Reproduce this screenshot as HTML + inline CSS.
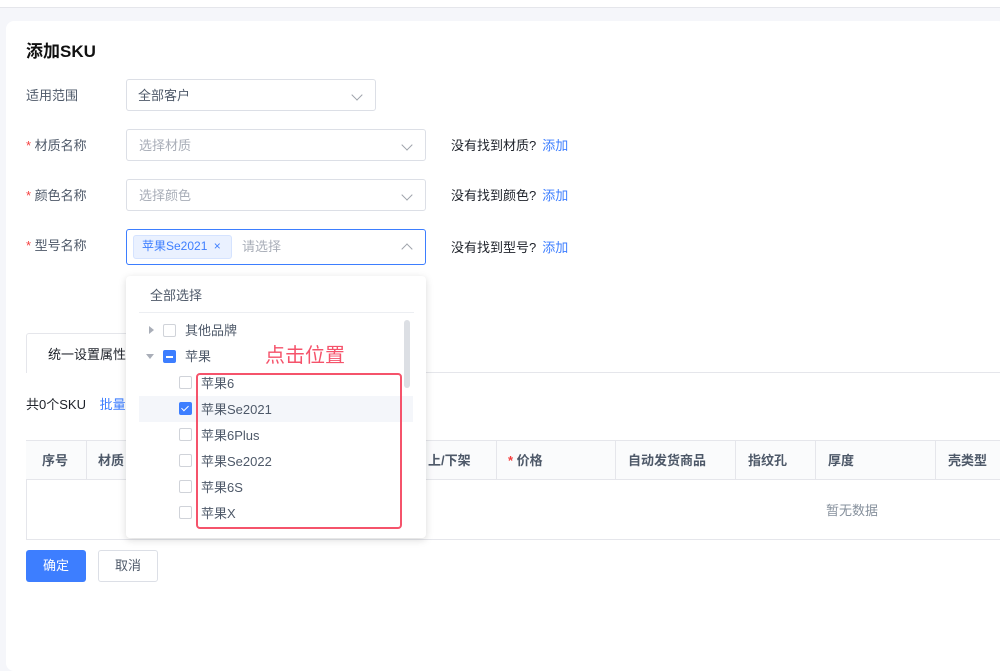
<!DOCTYPE html>
<html><head><meta charset="utf-8"><style>
*{margin:0;padding:0;box-sizing:border-box}
body{width:1000px;height:658px;overflow:hidden;background:#f5f6fa;font-family:"Liberation Sans","Noto Sans CJK SC",sans-serif;font-size:13px;color:#1d2129;position:relative;line-height:15px}
.a{position:absolute;white-space:nowrap}
.top{left:0;top:0;width:1000px;height:8px;background:#fff;border-bottom:1px solid #e5e6eb}
.card{left:6px;top:21px;width:1000px;height:650px;background:#fff;border-radius:8px}
.lbl{color:#4e5969;font-size:13px}
.req:before{content:"* ";color:#f53f3f}
.sel{border:1px solid #dcdfe6;border-radius:3px;height:32px;background:#fff}
.ph{color:#a9aeb8}
.chev{position:absolute;right:14px;top:11px;width:8px;height:8px;border-right:1px solid #9ea3ab;border-bottom:1px solid #9ea3ab;transform:rotate(45deg)}
.link{color:#3d7eff;margin-left:6px}
.cb{position:absolute;width:13px;height:13px;border:1px solid #d0d3d9;border-radius:2px;background:#fff}
.it{color:#4e5969;font-size:13px}
</style></head><body>
<div class="a top"></div>
<div class="a card"></div>
<div class="a" style="left:26px;top:42px;font-size:17px;line-height:20px;font-weight:bold;color:#111">添加SKU</div>

<div class="a lbl" style="left:26px;top:88px">适用范围</div>
<div class="a sel" style="left:126px;top:79px;width:250px"><span class="a" style="left:11px;top:8px;color:#4e5969">全部客户</span><i class="chev"></i></div>

<div class="a lbl req" style="left:26px;top:138px">材质名称</div>
<div class="a sel" style="left:126px;top:129px;width:300px"><span class="a ph" style="left:12px;top:8px">选择材质</span><i class="chev"></i></div>
<div class="a" style="left:451px;top:138px">没有找到材质?<span class="link">添加</span></div>

<div class="a lbl req" style="left:26px;top:188px">颜色名称</div>
<div class="a sel" style="left:126px;top:179px;width:300px"><span class="a ph" style="left:12px;top:8px">选择颜色</span><i class="chev"></i></div>
<div class="a" style="left:451px;top:188px">没有找到颜色?<span class="link">添加</span></div>

<div class="a lbl req" style="left:26px;top:238px">型号名称</div>
<div class="a sel" style="left:126px;top:229px;width:300px;height:36px;border-color:#3d7eff">
<span class="a" style="left:6px;top:5px;height:24px;width:99px;background:#eaf1ff;border:1px solid #d5e3ff;border-radius:3px;color:#3d7eff;font-size:12px;line-height:21px;padding-left:8px">苹果Se2021 <span style="margin-left:3px">×</span></span>
<span class="a ph" style="left:115px;top:9px">请选择</span>
<i class="chev" style="top:15px;transform:rotate(-135deg)"></i></div>
<div class="a" style="left:451px;top:240px">没有找到型号?<span class="link">添加</span></div>

<div class="a" style="left:26px;top:372px;width:980px;border-top:1px solid #e5e6eb"></div>
<div class="a" style="left:26px;top:333px;width:120px;height:40px;border:1px solid #e5e6eb;border-bottom:none;border-radius:3px 3px 0 0;background:#fff"><span class="a" style="left:21px;top:13px">统一设置属性</span></div>
<div class="a" style="left:26px;top:397px">共0个SKU <span class="link" style="margin-left:10px">批量</span></div>

<div class="a" style="left:26px;top:440px;width:980px;height:100px;border:1px solid #e5e6eb"></div>
<div class="a" style="left:26px;top:479px;width:980px;border-top:1px solid #e5e6eb"></div>
<div class="a" style="left:26px;top:441px;width:980px;height:38px;background:#fafbfc"></div>
<div class="a" style="left:86px;top:441px;height:38px;border-left:1px solid #e5e6eb"></div>
<div class="a" style="left:496px;top:441px;height:38px;border-left:1px solid #e5e6eb"></div>
<div class="a" style="left:615px;top:441px;height:38px;border-left:1px solid #e5e6eb"></div>
<div class="a" style="left:735px;top:441px;height:38px;border-left:1px solid #e5e6eb"></div>
<div class="a" style="left:815px;top:441px;height:38px;border-left:1px solid #e5e6eb"></div>
<div class="a" style="left:935px;top:441px;height:38px;border-left:1px solid #e5e6eb"></div>
<div class="a" style="top:453px;left:42px;color:#4e5969;font-weight:bold">序号</div>
<div class="a" style="top:453px;left:98px;color:#4e5969;font-weight:bold">材质</div>
<div class="a" style="top:453px;left:428px;color:#4e5969;font-weight:bold">上/下架</div>
<div class="a" style="top:453px;left:508px;color:#4e5969;font-weight:bold"><span style="color:#f53f3f">*</span> 价格</div>
<div class="a" style="top:453px;left:628px;color:#4e5969;font-weight:bold">自动发货商品</div>
<div class="a" style="top:453px;left:748px;color:#4e5969;font-weight:bold">指纹孔</div>
<div class="a" style="top:453px;left:828px;color:#4e5969;font-weight:bold">厚度</div>
<div class="a" style="top:453px;left:948px;color:#4e5969;font-weight:bold">壳类型</div>
<div class="a" style="top:503px;left:826px;color:#86909c">暂无数据</div>

<div class="a" style="left:26px;top:550px;width:60px;height:32px;background:#3d7eff;border-radius:3px;color:#fff;line-height:31px;text-align:center">确定</div>
<div class="a" style="left:98px;top:550px;width:60px;height:32px;border:1px solid #dcdfe6;border-radius:3px;color:#4e5969;line-height:29px;text-align:center;background:#fff">取消</div>

<div class="a" style="left:126px;top:276px;width:300px;height:262px;background:#fff;border-radius:4px;box-shadow:0 2px 8px rgba(0,0,0,.15)"></div>
<div class="a" style="left:150px;top:288px;color:#4e5969">全部选择</div>
<div class="a" style="left:139px;top:312px;width:275px;border-top:1px solid #eceef2"></div>
<div class="a" style="left:139px;top:396px;width:274px;height:26px;background:#f4f6fa"></div>
<div class="a" style="left:404px;top:320px;width:6px;height:68px;background:#dcdfe4;border-radius:3px"></div>
<div class="a" style="left:149px;top:326px;width:0;height:0;border-left:5px solid #a9aeb8;border-top:4px solid transparent;border-bottom:4px solid transparent"></div>
<div class="cb" style="left:163px;top:324px"></div>
<div class="a it" style="left:185px;top:323px">其他品牌</div>
<div class="a" style="left:146px;top:354px;width:0;height:0;border-top:5px solid #a9aeb8;border-left:4px solid transparent;border-right:4px solid transparent"></div>
<div class="cb" style="left:163px;top:350px;background:#3d7eff;border-color:#3d7eff"><i style="position:absolute;left:2px;top:5px;width:7px;height:1.5px;background:#fff"></i></div>
<div class="a it" style="left:185px;top:349px">苹果</div>
<div class="cb" style="left:179px;top:376px"></div><div class="a it" style="left:201px;top:376px">苹果6</div>
<div class="cb" style="left:179px;top:402px;background:#3d7eff;border-color:#3d7eff"><i style="position:absolute;left:3px;top:1px;width:4px;height:7px;border-right:1.5px solid #fff;border-bottom:1.5px solid #fff;transform:rotate(45deg)"></i></div><div class="a it" style="left:201px;top:402px">苹果Se2021</div>
<div class="cb" style="left:179px;top:428px"></div><div class="a it" style="left:201px;top:428px">苹果6Plus</div>
<div class="cb" style="left:179px;top:454px"></div><div class="a it" style="left:201px;top:454px">苹果Se2022</div>
<div class="cb" style="left:179px;top:480px"></div><div class="a it" style="left:201px;top:480px">苹果6S</div>
<div class="cb" style="left:179px;top:506px"></div><div class="a it" style="left:201px;top:506px">苹果X</div>
<div class="a" style="left:196px;top:373px;width:206px;height:156px;border:2px solid #f5536b;border-radius:4px"></div>
<div class="a" style="left:265px;top:345px;font-size:20px;line-height:22px;color:#f5536b">点击位置</div>
</body></html>
